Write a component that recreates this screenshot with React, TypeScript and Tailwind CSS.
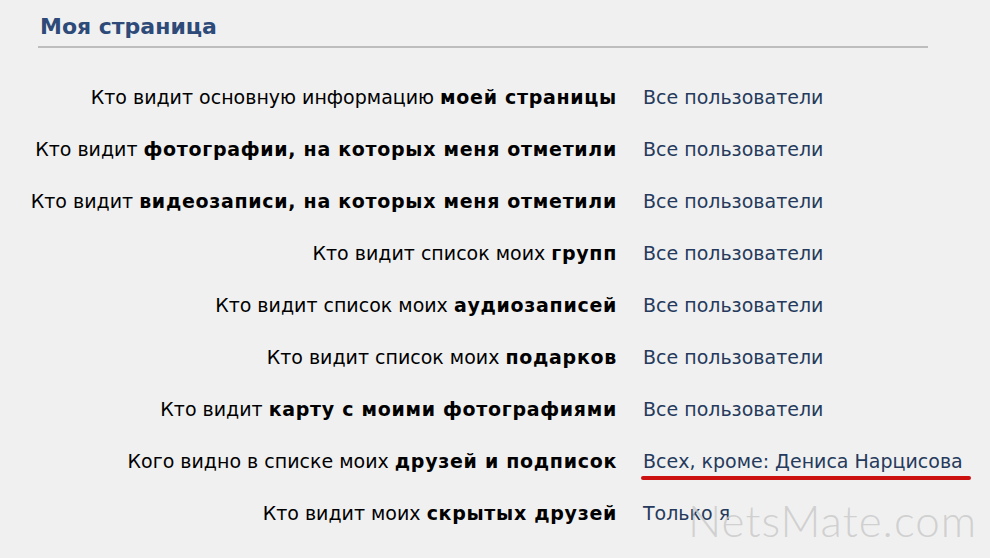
const rows: { pre: string; bold: string; value: string; mark?: boolean }[] = [
  { pre: "Кто видит основную информацию", bold: "моей страницы", value: "Все пользователи" },
  { pre: "Кто видит", bold: "фотографии, на которых меня отметили", value: "Все пользователи" },
  { pre: "Кто видит", bold: "видеозаписи, на которых меня отметили", value: "Все пользователи" },
  { pre: "Кто видит список моих", bold: "групп", value: "Все пользователи" },
  { pre: "Кто видит список моих", bold: "аудиозаписей", value: "Все пользователи" },
  { pre: "Кто видит список моих", bold: "подарков", value: "Все пользователи" },
  { pre: "Кто видит", bold: "карту с моими фотографиями", value: "Все пользователи" },
  { pre: "Кого видно в списке моих", bold: "друзей и подписок", value: "Всех, кроме: Дениса Нарцисова", mark: true },
  { pre: "Кто видит моих", bold: "скрытых друзей", value: "Только я" },
]

export default function App() {
  return (
    <div className="relative h-[558px] w-[990px] overflow-hidden bg-[#f0f0f0] font-['DejaVu_Sans',sans-serif]">
      <div className="pl-[38px] pr-[62px] pt-[13px]">
        <h1 className="border-b-2 border-[#bdbdbd] pb-[6px] pl-[2px] text-[22px] leading-[27px] font-bold text-[#2d4a78]">
          Моя страница
        </h1>
      </div>

      <div className="mt-[23px] grid grid-cols-[617px_1fr]">
        {rows.map((r, i) => (
          <div key={i} className="contents">
            <div className="flex h-[52px] items-center justify-end text-[19px] text-black">
              <span className="whitespace-nowrap">
                {r.pre} <b className="font-bold tracking-[0.7px]">{r.bold}</b>
              </span>
            </div>
            <div className="relative flex h-[52px] items-center pl-[26px] text-[19px] text-[#253a5c]">
              <span className="whitespace-nowrap">{r.value}</span>
              {r.mark && (
                <div className="absolute left-[24px] top-[41px] h-[4px] w-[330px] rounded-full bg-[#cc1111]" />
              )}
            </div>
          </div>
        ))}
      </div>

      <div className="pointer-events-none absolute left-[688px] top-[498px] font-['Lato',sans-serif] text-[44px] leading-none font-light tracking-[1px] text-[#c8c8c8]/80">
        NetsMate.com
      </div>
    </div>
  )
}
